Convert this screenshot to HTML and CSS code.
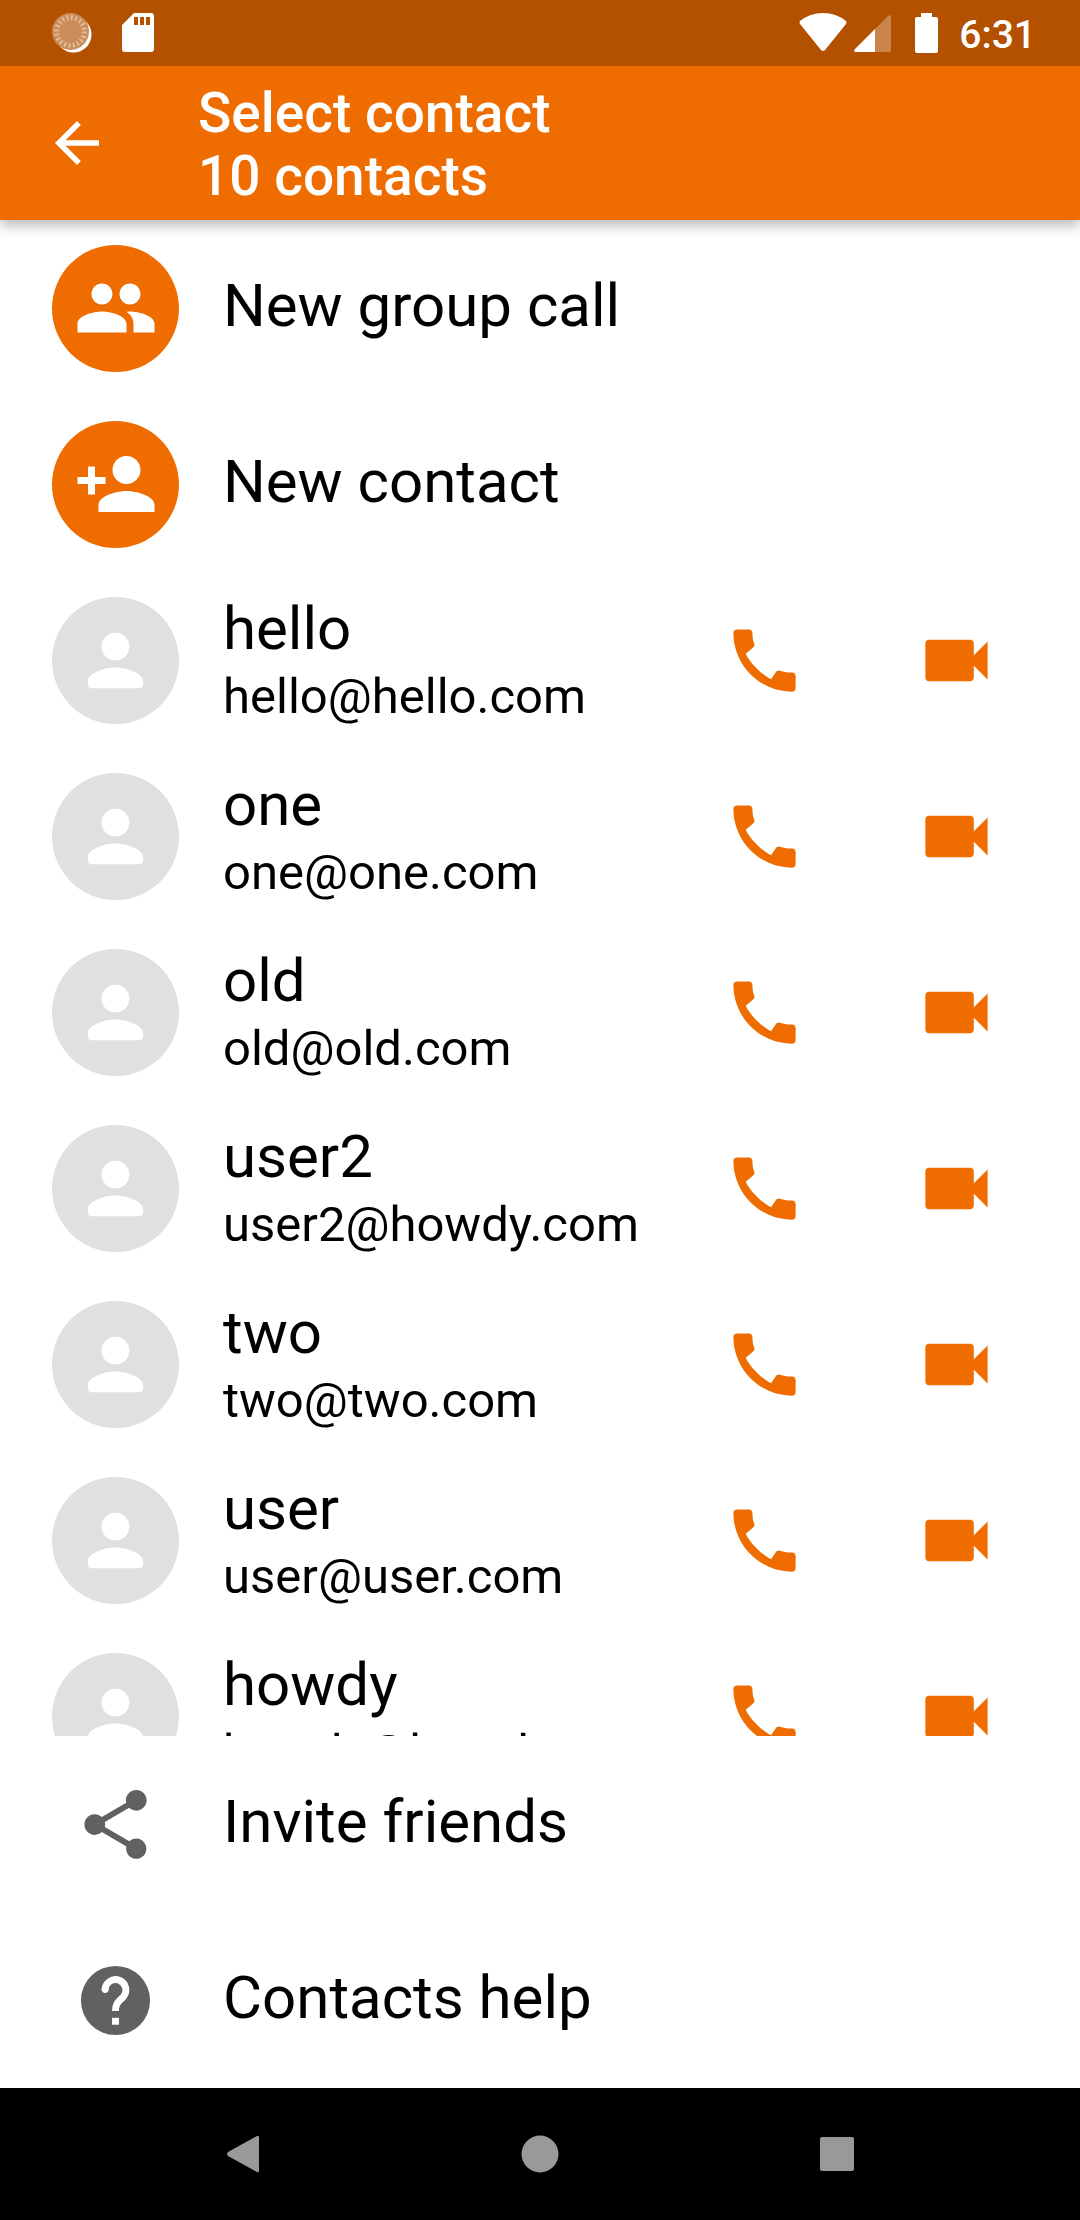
FILE: index.html
```html
<!DOCTYPE html>
<html lang="en">
<head>
<meta charset="utf-8">
<meta name="viewport" content="width=device-width, initial-scale=1">
<title>Select contact</title>
<link rel="stylesheet" href="styles.css">
</head>
<body>
<svg class="sprite" aria-hidden="true">
  <symbol id="person" viewBox="0 0 24 24"><path d="M12 12c2.21 0 4-1.79 4-4s-1.79-4-4-4-4 1.79-4 4 1.79 4 4 4zm0 2c-2.67 0-8 1.34-8 4v1c0 .55.45 1 1 1h14c.55 0 1-.45 1-1v-1c0-2.66-5.33-4-8-4z"/></symbol>
  <symbol id="call" viewBox="0 0 24 24"><path d="M20 15.5c-1.25 0-2.45-.2-3.57-.57-.35-.11-.74-.03-1.02.24L13.9 17.4c-2.83-1.44-5.8-4.3-7.35-7.35L8.800 8.200c.28-.28.36-.67.25-1.020C8.700 6.450 8.500 5.250 8.500 4c0-.55-.45-1-1-1H4c-.55 0-1 .45-1 1 0 9.390 7.610 17 17 17 .55 0 1-.45 1-1v-3.500c0-.55-.45-1-1-1z"/></symbol>
  <symbol id="videocam" viewBox="0 0 24 24"><path d="M17 10.500V7c0-.55-.45-1-1-1H4c-.55 0-1 .45-1 1v10c0 .55.45 1 1 1h12c.55 0 1-.45 1-1v-3.500l4 4v-11l-4 4z"/></symbol>
</svg>

<div class="status-bar">
  <div class="status-group notices">
    <svg class="sync" viewBox="0 0 40 40" aria-hidden="true">
      <circle cx="21.500" cy="21.500" r="18" fill="#fff"/>
      <circle cx="18.500" cy="18.500" r="18.500" fill="#cb8d5a"/>
      <circle cx="18.500" cy="18.500" r="14" fill="none" stroke="#e2bc9c" stroke-width="5" stroke-dasharray="1.800 2.598"/>
    </svg>
    <svg class="sd-card" viewBox="0 0 32 40" aria-hidden="true"><path fill="#fff" fill-rule="evenodd" d="M12 0h17a3 3 0 0 1 3 3v33a3 3 0 0 1-3 3H3a3 3 0 0 1-3-3V12zm0 4v8h4V4zm6 0v8h4V4zm6 0v8h4V4z"/></svg>
  </div>
  <div class="status-group">
    <svg class="wifi" viewBox="0 0 48 40" aria-hidden="true"><path fill="#fff" d="M1 8Q11 0 24 0t23 8q1 1 0 3L26 37q-2 2-4 0L1 11Q0 9 1 8z"/></svg>
    <svg class="signal" viewBox="0 0 38 40" aria-hidden="true"><path fill="#fff" fill-opacity=".3" d="M34 3q3-2 3 1v33q0 2-2 2H21V16z"/><path fill="#fff" d="M21 16v23H2q-3 0-1-3z"/></svg>
    <svg class="battery" viewBox="0 0 24 40" aria-hidden="true"><path fill="#fff" d="M6 0h11v4h4q2 0 2 2v32q0 2-2 2H2q-2 0-2-2V6q0-2 2-2h4z"/></svg>
    <time class="clock">6:31</time>
  </div>
</div>

<header class="app-bar">
  <button class="back" type="button" aria-label="Back"><svg viewBox="0 0 24 24" aria-hidden="true"><path d="M20 11H7.830l5.590-5.590L12 4l-8 8 8 8 1.410-1.410L7.830 13H20v-2z"/></svg></button>
  <h1 class="heading">Select contact<br>10 contacts</h1>
</header>

<main class="contact-list">
  <button class="row action" type="button">
    <span class="avatar accent"><svg viewBox="0 0 24 24" aria-hidden="true"><path d="M16 11c1.660 0 2.990-1.340 2.990-3S17.660 5 16 5s-3 1.340-3 3 1.340 3 3 3zm-8 0c1.660 0 2.990-1.340 2.990-3S9.660 5 8 5 5 6.340 5 8s1.340 3 3 3zm0 2c-2.330 0-7 1.170-7 3.500V19h14v-2.500c0-2.330-4.670-3.500-7-3.500zm8 0c-.29 0-.62.02-.97.05 1.160.84 1.970 1.970 1.970 3.450V19h6v-2.500c0-2.330-4.670-3.500-7-3.500z"/></svg></span>
    <span class="name">New group call</span>
  </button>
  <button class="row action" type="button">
    <span class="avatar accent"><svg viewBox="0 0 24 24" aria-hidden="true"><path d="M15 12c2.210 0 4-1.790 4-4s-1.790-4-4-4-4 1.790-4 4 1.790 4 4 4zm-9-2V7H4v3H1v2h3v3h2v-3h3v-2H6zm9 4c-2.670 0-8 1.340-8 4v2h16v-2c0-2.660-5.330-4-8-4z"/></svg></span>
    <span class="name">New contact</span>
  </button>
  <div class="row">
    <span class="avatar"><svg aria-hidden="true"><use href="#person"/></svg></span>
    <div class="details"><div class="name">hello</div><div class="email">hello@hello.com</div></div>
    <button class="call" type="button" aria-label="Call hello"><svg aria-hidden="true"><use href="#call"/></svg></button>
    <button class="call" type="button" aria-label="Video call hello"><svg aria-hidden="true"><use href="#videocam"/></svg></button>
  </div>
  <div class="row">
    <span class="avatar"><svg aria-hidden="true"><use href="#person"/></svg></span>
    <div class="details"><div class="name">one</div><div class="email">one@one.com</div></div>
    <button class="call" type="button" aria-label="Call one"><svg aria-hidden="true"><use href="#call"/></svg></button>
    <button class="call" type="button" aria-label="Video call one"><svg aria-hidden="true"><use href="#videocam"/></svg></button>
  </div>
  <div class="row">
    <span class="avatar"><svg aria-hidden="true"><use href="#person"/></svg></span>
    <div class="details"><div class="name">old</div><div class="email">old@old.com</div></div>
    <button class="call" type="button" aria-label="Call old"><svg aria-hidden="true"><use href="#call"/></svg></button>
    <button class="call" type="button" aria-label="Video call old"><svg aria-hidden="true"><use href="#videocam"/></svg></button>
  </div>
  <div class="row">
    <span class="avatar"><svg aria-hidden="true"><use href="#person"/></svg></span>
    <div class="details"><div class="name">user2</div><div class="email">user2@howdy.com</div></div>
    <button class="call" type="button" aria-label="Call user2"><svg aria-hidden="true"><use href="#call"/></svg></button>
    <button class="call" type="button" aria-label="Video call user2"><svg aria-hidden="true"><use href="#videocam"/></svg></button>
  </div>
  <div class="row">
    <span class="avatar"><svg aria-hidden="true"><use href="#person"/></svg></span>
    <div class="details"><div class="name">two</div><div class="email">two@two.com</div></div>
    <button class="call" type="button" aria-label="Call two"><svg aria-hidden="true"><use href="#call"/></svg></button>
    <button class="call" type="button" aria-label="Video call two"><svg aria-hidden="true"><use href="#videocam"/></svg></button>
  </div>
  <div class="row">
    <span class="avatar"><svg aria-hidden="true"><use href="#person"/></svg></span>
    <div class="details"><div class="name">user</div><div class="email">user@user.com</div></div>
    <button class="call" type="button" aria-label="Call user"><svg aria-hidden="true"><use href="#call"/></svg></button>
    <button class="call" type="button" aria-label="Video call user"><svg aria-hidden="true"><use href="#videocam"/></svg></button>
  </div>
  <div class="row">
    <span class="avatar"><svg aria-hidden="true"><use href="#person"/></svg></span>
    <div class="details"><div class="name">howdy</div><div class="email">howdy@howdy.com</div></div>
    <button class="call" type="button" aria-label="Call howdy"><svg aria-hidden="true"><use href="#call"/></svg></button>
    <button class="call" type="button" aria-label="Video call howdy"><svg aria-hidden="true"><use href="#videocam"/></svg></button>
  </div>
</main>

<footer class="footer">
  <button class="row action" type="button">
    <span class="avatar plain"><svg viewBox="0 0 24 24" aria-hidden="true"><path d="M18 16.080c-.76 0-1.440.3-1.960.77L8.910 12.700c.05-.23.09-.46.09-.7s-.04-.47-.09-.7l7.050-4.110c.54.5 1.250.81 2.040.81 1.660 0 3-1.340 3-3s-1.340-3-3-3-3 1.340-3 3c0 .24.04.47.09.7L8.040 9.810C7.500 9.310 6.790 9 6 9c-1.660 0-3 1.340-3 3s1.340 3 3 3c.79 0 1.500-.31 2.040-.81l7.120 4.160c-.05.21-.08.43-.08.65 0 1.610 1.310 2.920 2.920 2.920s2.920-1.310 2.920-2.920-1.310-2.920-2.920-2.920z"/></svg></span>
    <span class="name">Invite friends</span>
  </button>
  <button class="row action" type="button">
    <span class="avatar plain"><svg viewBox="0 0 24 24" aria-hidden="true"><circle cx="12" cy="12" r="10"/><path d="M9 9a3 3 0 1 1 5.200 2c-1.100 1.150-2.200 1.700-2.200 4" fill="none" stroke="#fff" stroke-width="2"/><circle cx="9" cy="8.800" r="1" fill="#fff"/><path d="M11 17h2v2h-2z" fill="#fff"/></svg></span>
    <span class="name">Contacts help</span>
  </button>
</footer>

<nav class="nav-bar" aria-label="System">
  <button type="button" aria-label="Back"><svg viewBox="0 0 40 40" aria-hidden="true"><path d="M34 2q2-1 2 1v34q0 2-2 1L5 22q-2-2 0-4z"/></svg></button>
  <button type="button" aria-label="Home"><svg viewBox="0 0 40 40" aria-hidden="true"><circle cx="20" cy="20" r="18.500"/></svg></button>
  <button type="button" aria-label="Recent apps"><svg viewBox="0 0 40 40" aria-hidden="true"><rect x="3" y="3" width="34" height="34" rx="2"/></svg></button>
</nav>
</body>
</html>
```
FILE: styles.css
```css
:root {
  --accent: #ef6c00;
  --accent-dark: #b35100;
}

* {
  box-sizing: border-box;
}

body {
  margin: 0;
  height: 100vh;
  display: flex;
  flex-direction: column;
  background: #fff;
  color: #000;
  font-family: Roboto, "Liberation Sans", sans-serif;
}

button {
  margin: 0;
  padding: 0;
  border: 0;
  background: none;
  color: inherit;
  font: inherit;
  text-align: left;
  cursor: pointer;
}

svg {
  display: block;
  fill: currentColor;
}

.sprite {
  display: none;
}

.status-bar {
  position: relative;
  z-index: 2;
  flex: none;
  display: flex;
  justify-content: space-between;
  align-items: center;
  height: 66px;
  padding: 0 44px 0 52px;
  background: var(--accent-dark);
  color: #fff;
}

.status-group {
  display: flex;
  align-items: center;
}

.status-group svg {
  height: 40px;
}

.notices {
  gap: 30px;
}

.sync {
  width: 40px;
}

.sd-card {
  width: 32px;
}

.wifi {
  width: 48px;
  margin-right: 7px;
}

.signal {
  width: 38px;
  margin-right: 23px;
}

.battery {
  width: 24px;
  margin-right: 20px;
}

.clock {
  padding-top: 4px;
  font-size: 39px;
  font-weight: 500;
  line-height: 48px;
}

.app-bar {
  position: relative;
  z-index: 1;
  flex: none;
  display: flex;
  align-items: center;
  gap: 88px;
  height: 154px;
  padding: 0 44px;
  background: var(--accent);
  color: #fff;
  box-shadow: 0 5px 13px rgba(0, 0, 0, 0.3);
}

.back svg {
  width: 66px;
  height: 66px;
}

.heading {
  margin: 0;
  padding-top: 4px;
  font-size: 55px;
  font-weight: 500;
  line-height: 63px;
}

.contact-list {
  flex: 1;
  min-height: 0;
  overflow-y: auto;
  scrollbar-width: none;
}

.row {
  display: flex;
  align-items: center;
  width: 100%;
  height: 176px;
  padding: 0 28px 0 52px;
}

.avatar {
  flex: none;
  display: grid;
  place-items: center;
  width: 127px;
  height: 127px;
  margin-right: 44px;
  border-radius: 50%;
  background: #e0e0e0;
  color: #fff;
}

.avatar svg {
  width: 83px;
  height: 83px;
}

.accent {
  background: var(--accent);
}

.accent svg {
  width: 84px;
  height: 84px;
}

.plain {
  background: none;
  color: #616161;
}

.details {
  flex: 1;
  min-width: 0;
}

.name {
  padding-bottom: 4px;
  font-size: 60px;
  line-height: 72px;
}

.email {
  padding-bottom: 2px;
  font-size: 49px;
  line-height: 56px;
}

.call {
  flex: none;
  display: grid;
  place-items: center;
  width: 192px;
  height: 132px;
  color: var(--accent);
}

.call svg {
  width: 83px;
  height: 83px;
}

.footer {
  flex: none;
}

.nav-bar {
  flex: none;
  display: grid;
  grid-template-columns: repeat(3, 1fr);
  height: 132px;
  padding: 0 94px;
  background: #000;
  color: #999;
}

.nav-bar button {
  display: grid;
  place-items: center;
}

.nav-bar svg {
  width: 40px;
  height: 40px;
}
```
